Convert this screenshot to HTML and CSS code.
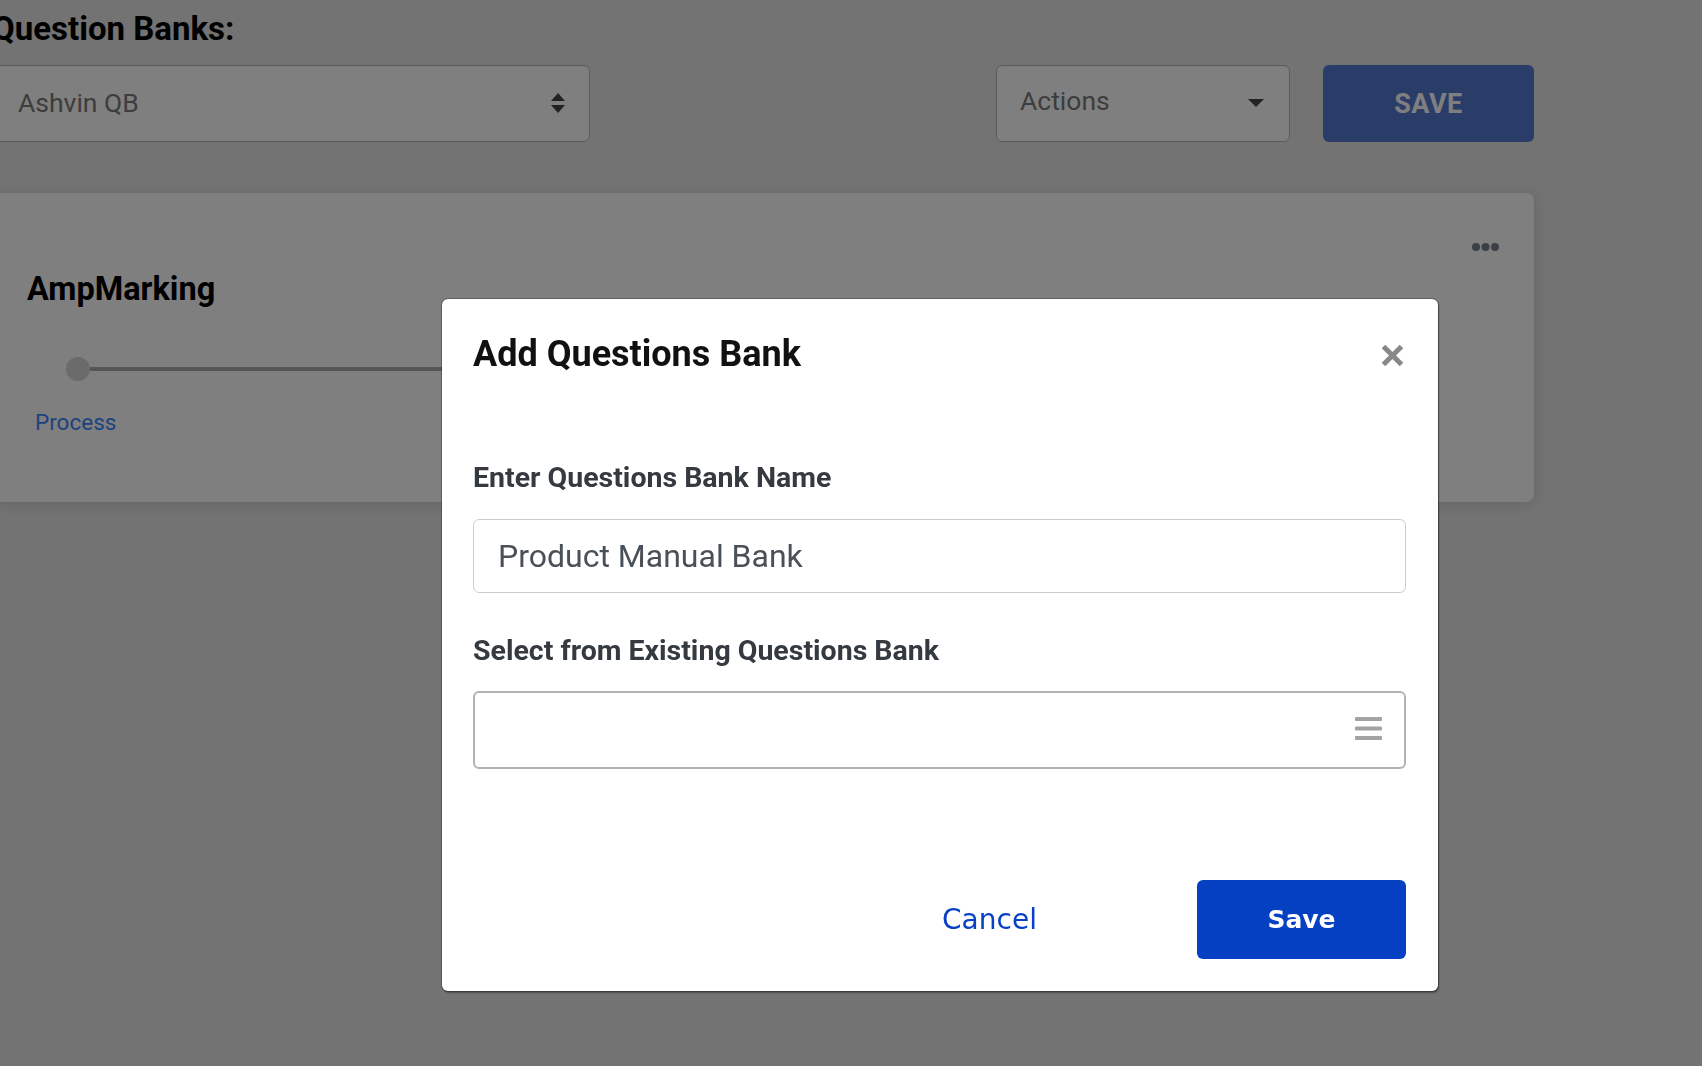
FILE: index.html
```html
<!DOCTYPE html>
<html lang="en">
<head>
<meta charset="utf-8">
<title>Question Banks</title>
<link rel="stylesheet" href="styles.css">
</head>
<body>
  <div class="page">
    <h1 class="page-title">Question Banks:</h1>
    <div class="toolbar">
      <div class="qb-select">
        <span>Ashvin QB</span>
        <svg class="updown" width="14" height="20" viewBox="0 0 14 20"><polygon points="0,8 7,0 14,8"/><polygon points="0,12 14,12 7,20"/></svg>
      </div>
      <div class="toolbar-right">
        <div class="actions">
          <span>Actions</span>
          <svg class="caret" width="16" height="8" viewBox="0 0 16 8"><polygon points="0,0 16,0 8,8"/></svg>
        </div>
        <button class="btn-top-save">SAVE</button>
      </div>
    </div>
    <div class="card">
      <div class="card-head">
        <h2 class="card-title">AmpMarking</h2>
        <svg class="dots" width="27" height="8" viewBox="0 0 27 8"><circle cx="4" cy="4" r="4"/><circle cx="13.5" cy="4" r="4"/><circle cx="23" cy="4" r="4"/></svg>
      </div>
      <div class="stepper-track">
        <span class="step-dot"></span>
        <span class="step-line"></span>
        <span class="step-dot"></span>
      </div>
      <div class="stepper-labels">
        <span class="step-label">Process</span>
        <span class="step-label">Review</span>
      </div>
    </div>
  </div>

  <div class="backdrop"></div>

  <div class="modal">
    <div class="modal-head">
      <h3 class="modal-title">Add Questions Bank</h3>
      <button class="modal-close" aria-label="Close">
        <svg width="23" height="23" viewBox="0 0 23 23"><path d="M2.5 2.5 L20.5 20.5 M20.5 2.5 L2.5 20.5"/></svg>
      </button>
    </div>
    <div class="field field-first">
      <label class="field-label">Enter Questions Bank Name</label>
      <input class="text-input" type="text" value="Product Manual Bank">
    </div>
    <div class="field field-second">
      <label class="field-label">Select from Existing Questions Bank</label>
      <div class="multi-select">
        <svg width="27" height="23" viewBox="0 0 27 23"><rect x="0" y="0" width="27" height="4" rx="1"/><rect x="0" y="9.5" width="27" height="4" rx="1"/><rect x="0" y="19" width="27" height="4" rx="1"/></svg>
      </div>
    </div>
    <div class="modal-foot">
      <button class="btn-cancel">Cancel</button>
      <button class="btn-save">Save</button>
    </div>
  </div>
</body>
</html>
```

FILE: styles.css
```css
html, body {
  margin: 0;
  padding: 0;
}

body {
  background: #e5e6e5;
  font-family: Roboto, "Liberation Sans", sans-serif;
  overflow: hidden;
  height: 1066px;
}

.page {
  margin-left: -8px;
  width: 1542px;
  padding-top: 9px;
}

.page-title {
  margin: 0;
  font-size: 33px;
  font-weight: 700;
  line-height: 1.2;
  color: #000;
}

.toolbar {
  display: flex;
  justify-content: space-between;
  align-items: center;
  margin-top: 16px;
}

.qb-select {
  box-sizing: border-box;
  width: 598px;
  height: 77px;
  border: 1px solid #b6b6b6;
  border-radius: 6px;
  background: #fff;
  display: flex;
  align-items: center;
  justify-content: space-between;
  padding: 0 24px 2px 25px;
  font-size: 26.5px;
  color: #7a7a7a;
}

.updown {
  fill: #444;
  margin-top: 2px;
}

.toolbar-right {
  display: flex;
  gap: 33px;
}

.actions {
  box-sizing: border-box;
  width: 294px;
  height: 77px;
  border: 1px solid #b6b6b6;
  border-radius: 6px;
  background: #fff;
  display: flex;
  align-items: center;
  justify-content: space-between;
  padding: 0 25px 5px 23px;
  font-size: 26.5px;
  color: #7a7a7a;
}

.caret {
  fill: #444;
  margin-top: 5px;
}

.btn-top-save {
  width: 211px;
  height: 77px;
  border: 0;
  border-radius: 6px;
  background: #5479d1;
  color: #fff;
  font-family: Roboto, "Liberation Sans", sans-serif;
  font-weight: 700;
  font-size: 27px;
  letter-spacing: 0.5px;
  padding-top: 2px;
}

.card {
  margin-top: 51px;
  background: #fff;
  border-radius: 8px;
  padding: 46px 35px 66px 35px;
  box-shadow: 0 2px 14px rgba(0, 0, 0, 0.12);
}

.card-head {
  display: flex;
  justify-content: space-between;
  align-items: flex-start;
}

.card-title {
  margin: 31px 0 0;
  font-size: 32.5px;
  font-weight: 700;
  line-height: 1.2;
  color: #000;
}

.dots {
  margin-top: 4px;
  fill: #76808e;
}

.stepper-track {
  display: flex;
  align-items: center;
  margin-top: 48px;
  padding-left: 39px;
  padding-right: 200px;
}

.step-dot {
  width: 24px;
  height: 24px;
  border-radius: 50%;
  background: #d6d6d6;
  flex: none;
}

.step-line {
  flex: 1;
  height: 4px;
  background: #aaaaaa;
}

.stepper-labels {
  display: flex;
  justify-content: space-between;
  margin-top: 28px;
  padding-left: 8px;
  padding-right: 200px;
}

.step-label {
  font-size: 22.5px;
  line-height: 1.2;
  color: #3b86fe;
}

.backdrop {
  position: fixed;
  inset: 0;
  background: rgba(0, 0, 0, 0.5);
}

.modal {
  position: fixed;
  left: 442px;
  top: 299px;
  width: 996px;
  box-sizing: border-box;
  background: #fff;
  border-radius: 6px;
  padding: 34px 32px 32px 31px;
  box-shadow: 0 0 0 1px rgba(0, 0, 0, 0.25), 1px 2px 2px rgba(0, 0, 0, 0.35);
}

.modal-head {
  display: flex;
  justify-content: space-between;
  align-items: center;
}

.modal-title {
  margin: 0;
  font-size: 36px;
  font-weight: 700;
  line-height: 1.2;
  color: #111;
}

.modal-close {
  background: none;
  border: 0;
  padding: 0;
  margin-right: 2px;
  margin-top: 2px;
  display: flex;
}

.modal-close path {
  stroke: #888;
  stroke-width: 5;
  fill: none;
}

.field {
  display: flex;
  flex-direction: column;
}

.field-first {
  margin-top: 85px;
}

.field-second {
  margin-top: 41px;
}

.field-label {
  font-size: 28.5px;
  font-weight: 700;
  line-height: 1.2;
  color: #343a40;
  margin-bottom: 23.5px;
}

.field-second .field-label {
  margin-bottom: 22.5px;
}

.text-input {
  box-sizing: border-box;
  width: 100%;
  height: 74px;
  border: 1px solid #c9ced4;
  border-radius: 6px;
  padding: 0 24px;
  font-family: Roboto, "Liberation Sans", sans-serif;
  font-size: 32px;
  color: #495057;
  background: #fff;
  outline: none;
}

.multi-select {
  box-sizing: border-box;
  height: 78px;
  border: 2px solid #b3b3b3;
  border-radius: 6px;
  display: flex;
  justify-content: flex-end;
  align-items: center;
  padding-right: 22px;
}

.multi-select svg {
  fill: #a3a3a3;
  margin-top: -3px;
}

.modal-foot {
  display: flex;
  justify-content: flex-end;
  align-items: center;
  gap: 103px;
  margin-top: 111px;
}

.btn-cancel {
  width: 209px;
  height: 79px;
  background: none;
  border: 0;
  font-family: "DejaVu Sans", sans-serif;
  font-size: 28px;
  color: #0a40c8;
  padding-top: 2px;
}

.btn-save {
  width: 209px;
  height: 79px;
  background: #0640c2;
  border: 0;
  border-radius: 6px;
  font-family: "DejaVu Sans", sans-serif;
  font-weight: 700;
  font-size: 25px;
  color: #fff;
  padding-top: 2px;
}
```
